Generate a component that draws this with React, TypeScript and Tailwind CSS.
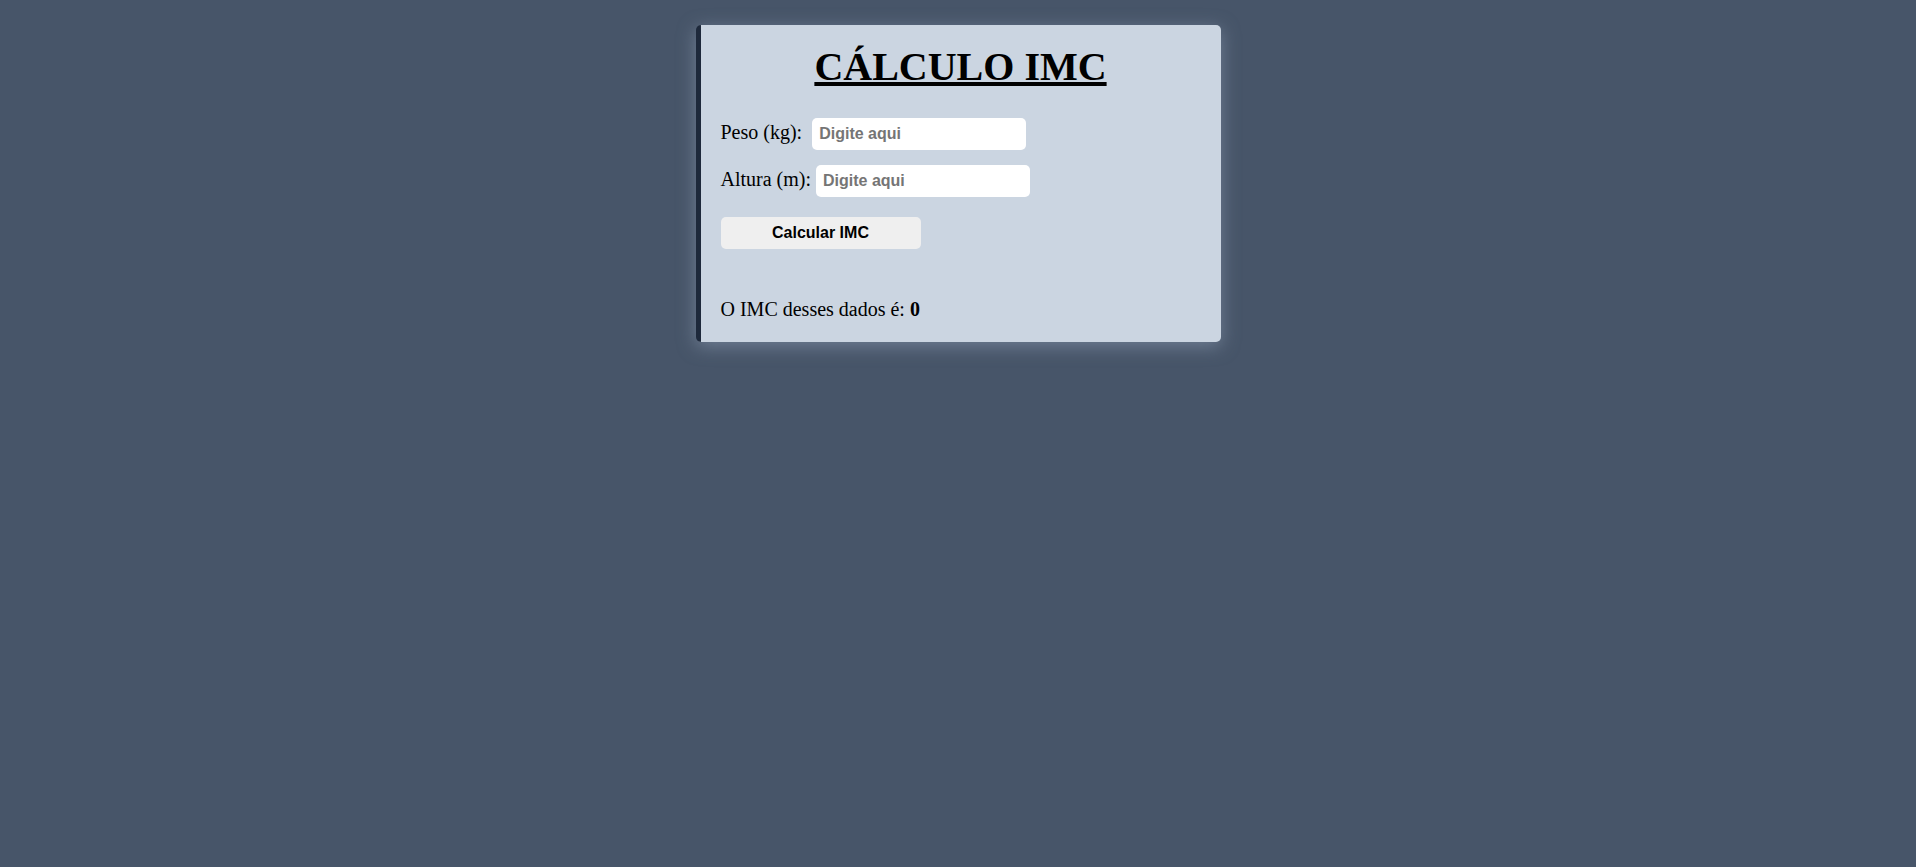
import { useState } from "react";

export default function App() {
  const [peso, setPeso] = useState("");
  const [altura, setAltura] = useState("");
  const [imc, setImc] = useState("0");

  function calcular() {
    const p = parseFloat(peso.replace(",", "."));
    const a = parseFloat(altura.replace(",", "."));
    if (!p || !a) {
      setImc("0");
      return;
    }
    setImc((p / (a * a)).toFixed(2));
  }

  return (
    <div className="min-h-screen bg-[#475569] pt-[25px] font-['Liberation_Serif',serif] text-black">
      <div className="mx-auto w-[525px] rounded-[5px] border-l-[5px] border-[#1e293b] bg-[#cbd5e1] px-[20px] pt-[19px] pb-[21px] shadow-[0_4px_18px_rgba(148,163,184,0.55)]">
        <h1 className="text-center text-[40px] leading-[46px] font-bold underline">
          CÁLCULO IMC
        </h1>

        <div className="mt-[28px] flex h-[32px] items-center text-[20px]">
          <label htmlFor="peso" className="mb-[4px]">Peso (kg):</label>
          <input
            id="peso"
            value={peso}
            onChange={(e) => setPeso(e.target.value)}
            placeholder="Digite aqui"
            className="ml-[10px] h-[32px] w-[214px] rounded-[5px] bg-white px-[7px] font-['Liberation_Sans',Arial,sans-serif] text-[16px] font-bold outline-none placeholder:text-[#757575]"
          />
        </div>

        <div className="mt-[15px] flex h-[32px] items-center text-[20px]">
          <label htmlFor="altura" className="mb-[4px]">Altura (m):</label>
          <input
            id="altura"
            value={altura}
            onChange={(e) => setAltura(e.target.value)}
            placeholder="Digite aqui"
            className="ml-[5px] h-[32px] w-[214px] rounded-[5px] bg-white px-[7px] font-['Liberation_Sans',Arial,sans-serif] text-[16px] font-bold outline-none placeholder:text-[#757575]"
          />
        </div>

        <button
          onClick={calcular}
          className="mt-[20px] block h-[32px] w-[200px] rounded-[5px] bg-[#efefef] font-['Liberation_Sans',Arial,sans-serif] text-[16px] font-bold"
        >
          Calcular IMC
        </button>

        <p className="mt-[49px] text-[20px] leading-[23px]">
          O IMC desses dados é: <strong>{imc}</strong>
        </p>
      </div>
    </div>
  );
}
